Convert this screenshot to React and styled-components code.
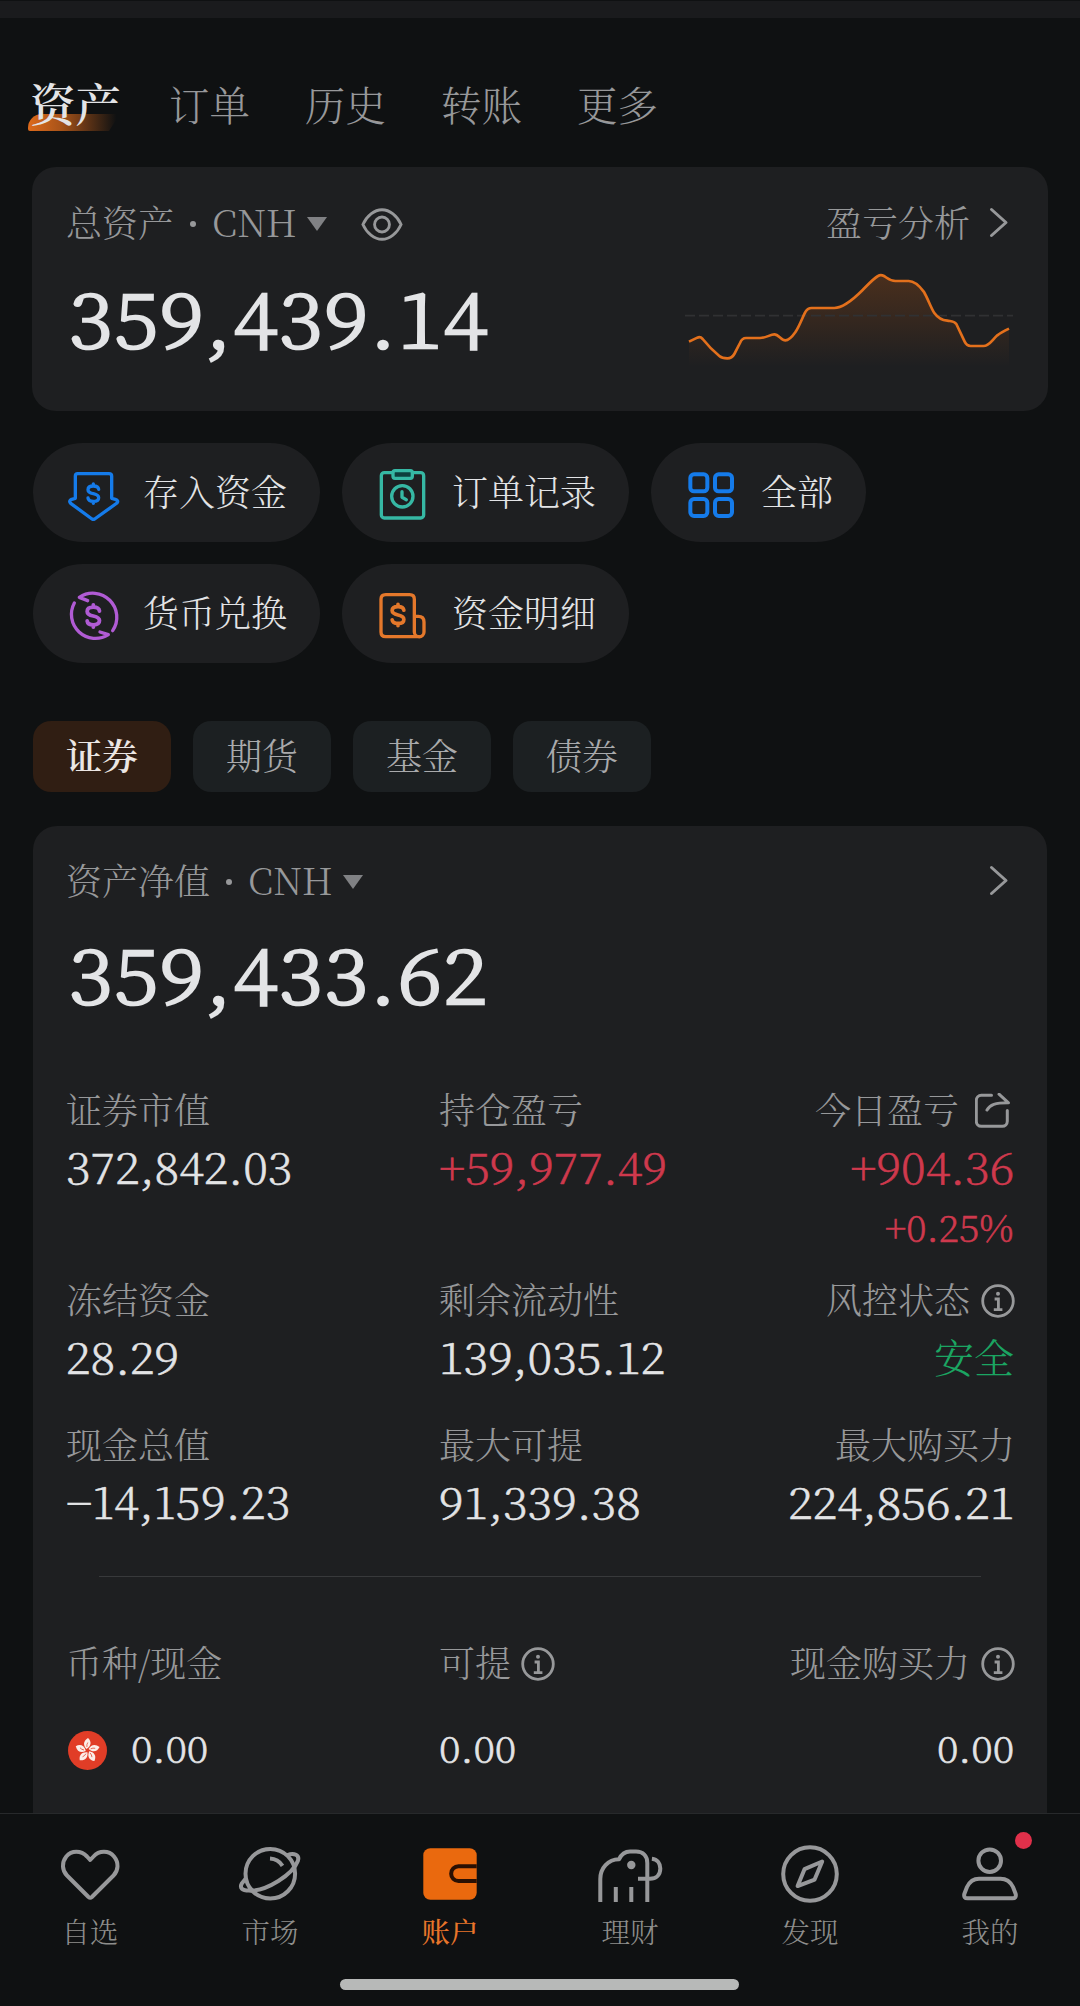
import React, { Component } from "react";
import styled, { createGlobalStyle } from "styled-components";

const serif = `"Noto Serif CJK SC", "Noto Sans CJK SC", serif`;

const colors = {
  page: "#0f1112",
  card: "#1e1f21",
  text: "#e3e4e6",
  muted: "#97989a",
  orange: "#ea690e",
  red: "#cf394d",
  green: "#1ba562"
};

const GlobalStyle = createGlobalStyle`
  body {
    margin: 0;
    background: ${colors.page};
  }
  * {
    box-sizing: border-box;
  }
`;

const Screen = styled.div`
  display: flex;
  flex-direction: column;
  width: 1080px;
  height: 2006px;
  overflow: hidden;
  background: ${colors.page};
  color: ${colors.text};
  font-family: ${serif};
  font-weight: 300;
  white-space: nowrap;
`;

const Strip = styled.div`
  flex: none;
  height: 17px;
  margin-top: 1px;
  background: #1a1b1d;
`;

const Tabs = styled.nav`
  flex: none;
  display: flex;
  height: 149px;
  padding: 62px 0 0 30px;
`;

const Tab = styled.div`
  margin-right: 55px;
  font-size: 40.5px;
  line-height: 48px;
  color: ${colors.muted};
`;

const ActiveTab = styled.div`
  position: relative;
  margin: -1px 48px 0 0;
  font-size: 45.5px;
  line-height: 48px;
  font-weight: 600;
  color: ${colors.text};

  &::before {
    content: "";
    position: absolute;
    left: -2px;
    top: 35px;
    width: 92px;
    height: 17px;
    border-radius: 14px 0 0 2px;
    background: linear-gradient(90deg, #dd6a1b, rgba(221, 106, 27, 0.75) 35%, transparent 96%);
    clip-path: polygon(0 0, 100% 0, 88% 100%, 0 100%);
  }

  span {
    position: relative;
  }
`;

const Card = styled.section`
  flex: ${props => (props.$fill ? "1" : "none")};
  height: ${props => (props.$fill ? "auto" : "244px")};
  min-height: 0;
  margin: ${props => (props.$fill ? "34px 33px 0" : "0 32px")};
  padding: ${props => (props.$fill ? "36px 32px 0 33px" : "37px 35px 0 34px")};
  border-radius: ${props => (props.$fill ? "24px 24px 0 0" : "24px")};
  background: ${colors.card};
`;

const CardHeader = styled.div`
  display: flex;
  align-items: center;
  height: 36px;
`;

const Label = styled.div`
  font-size: 36px;
  line-height: 36px;
  height: 36px;
  color: ${colors.muted};
`;

const Dot = styled.i`
  width: 6px;
  height: 6px;
  margin: 3px 16px 0 16px;
  border-radius: 50%;
  background: ${colors.muted};
`;

const Currency = styled.span`
  font-size: 36.5px;
  line-height: 34px;
  height: 36px;
  color: ${colors.muted};
`;

const Triangle = styled.i`
  margin: 4px 0 0 10px;
  border: 10.5px solid transparent;
  border-top: 14px solid #808184;
  border-bottom: 0;
`;

const EyeButton = styled.span`
  display: flex;
  margin: 4px 0 0 34px;
`;

const HeaderLink = styled.div`
  display: flex;
  align-items: center;
  gap: 18px;
  margin-left: auto;
  padding-right: ${props => props.$inset || 0}px;
`;

const BigRow = styled.div`
  display: flex;
  justify-content: space-between;
  margin-top: 41px;

  svg {
    margin-top: -11px;
  }
`;

const BigNumber = styled.div`
  height: 80px;
  margin: ${props => props.$top || 0}px 0 0 3px;
  font-size: 76px;
  line-height: 69px;
  font-weight: 200;
  letter-spacing: 1.5px;
  transform: scaleX(1.08);
  transform-origin: left;
  -webkit-text-stroke: 2.6px ${colors.text};
`;

const Pills = styled.div`
  flex: none;
  display: flex;
  flex-wrap: wrap;
  gap: 22px;
  margin: 32px 33px 0;
`;

const Pill = styled.button`
  display: flex;
  align-items: center;
  gap: 23px;
  height: 99px;
  padding: 0 33px;
  border: 0;
  border-radius: 50px;
  background: ${colors.card};
  color: ${colors.text};
  font: inherit;
  font-size: 36px;
  line-height: 36px;

  svg {
    overflow: visible;
  }

  span {
    margin-top: -3px;
  }
`;

const Segments = styled.div`
  flex: none;
  display: flex;
  gap: 22px;
  margin: 58px 33px 0;
`;

const Segment = styled.div`
  width: 138px;
  height: 71px;
  border-radius: 18px;
  text-align: center;
  font-size: 36px;
  line-height: 67px;
  background: ${props => (props.$active ? "#301e13" : "#1c2022")};
  color: ${props => (props.$active ? "#ebe6e3" : "#a9aaac")};
  font-weight: ${props => (props.$active ? 600 : 300)};
`;

const Grid = styled.div`
  display: grid;
  grid-template-columns: 373px 1fr 1fr;
  margin-top: ${props => props.$top}px;
`;

const Cell = styled.div`
  display: flex;
  flex-direction: column;
  gap: ${props => props.$gap || 19}px;
  align-items: ${props => (props.$right ? "flex-end" : "flex-start")};
`;

const LabelRow = styled.div`
  display: flex;
  align-items: center;
  gap: ${props => props.$gap || 11}px;
  height: 36px;
  padding-right: ${props => props.$inset || 0}px;

  svg {
    position: relative;
    top: 2px;
  }
`;

const Value = styled.div`
  display: flex;
  align-items: center;
  height: ${props => (props.$small ? 36 : 46)}px;
  padding-bottom: ${props => (props.$small ? 6 : 6)}px;
  font-size: ${props => (props.$small ? 37.5 : 43)}px;
  font-weight: 200;
  line-height: 46px;
  color: ${props => colors[props.$color] || colors.text};
  -webkit-text-stroke: 0.6px;
  transform: scaleX(${props => props.$stretch || 1.07});
  transform-origin: left;

  ${Cell}:last-child & {
    margin-right: 1px;
    transform-origin: right;
  }
`;

const Status = styled.div`
  height: 46px;
  margin-right: 1px;
  font-size: 40px;
  line-height: 40px;
  color: ${colors.green};
`;

const Divider = styled.hr`
  height: 1px;
  margin: 49px 34px 0 33px;
  border: 0;
  background: #38393b;
`;

const CurrencyCell = styled.div`
  display: flex;
  align-items: center;
  gap: 24px;
  height: 46px;
  padding: 0 0 4px 2px;
`;

const BottomBar = styled.footer`
  flex: none;
  height: 193px;
  border-top: 1px solid #27292b;
  background: ${colors.page};
`;

const BottomTabs = styled.div`
  display: grid;
  grid-template-columns: repeat(6, 180px);
  height: 165px;
  padding-top: 27px;
`;

const BottomTab = styled.div`
  position: relative;
  display: flex;
  flex-direction: column;
  align-items: center;
  gap: 10px;
  font-size: 28.5px;
  line-height: 28px;
  font-weight: ${props => (props.$active ? 500 : 300)};
  color: ${props => (props.$active ? "#e8752a" : "#8e8e8c")};
`;

const Badge = styled.i`
  position: absolute;
  left: 115px;
  top: -9px;
  width: 17px;
  height: 17px;
  border-radius: 50%;
  background: #e0304a;
`;

const HomeIndicator = styled.div`
  width: 399px;
  height: 11px;
  margin: 0 0 0 340px;
  border-radius: 6px;
  background: #b7b9b8;
`;

const Eye = () => (
  <svg width="42" height="35" viewBox="0 0 44 36" fill="none" stroke="#97989a" strokeWidth="3">
    <path d="M2 18C6 9 14 2.5 22 2.5S38 9 42 18C38 27 30 33.5 22 33.5S6 27 2 18Z" />
    <circle cx="22" cy="18" r="7.8" />
  </svg>
);

const Chevron = () => (
  <svg width="24" height="32" viewBox="0 0 24 32" fill="none" stroke="#97989a" strokeWidth="3" strokeLinecap="round" strokeLinejoin="round">
    <path d="M3.5 3.5L18 16.5L3.5 29.5" />
  </svg>
);

const Info = () => (
  <svg width="34" height="34" viewBox="0 0 34 34" fill="none" stroke="#97989a" strokeWidth="2.8">
    <circle cx="17" cy="17" r="15.3" />
    <circle cx="17" cy="9.8" r="2" fill="#97989a" stroke="none" />
    <path d="M13.6 15H17.4V25.2M12.8 25.6H21.4" />
  </svg>
);

const Share = () => (
  <svg width="37" height="36" viewBox="0 0 37 36" fill="none" stroke="#97989a" strokeWidth="3" strokeLinecap="round" strokeLinejoin="round">
    <path d="M16.5 2.3H6.3a5 5 0 0 0-5 5V28.3a5 5 0 0 0 5 5H27.3a5 5 0 0 0 5-5V17.5" />
    <path d="M12 17C15 11.5 20 9.8 33.5 9.8L24 1.2" />
  </svg>
);

const CURVE =
  "M147 545L172 533Q181 529 188 537Q212 567 238 588Q246 595 262 595Q276 595 283 582L300 549Q306 534 318 534H360C380 534 390 523 403 523C416 523 424 541 436 541C446 541 460 525 467 515C476 503 487 474 495 458Q502 444 515 444H583C612 444 650 408 668 390C685 373 700 356 714 348Q722 343 732 348C742 354 750 363 766 363H806C828 363 843 384 852 396C864 417 874 446 883 459C893 473 910 481 922 482C934 484 942 482 949 492L974 545Q980 558 992 558H1030C1048 558 1056 540 1072 526Q1084 517 1107 506";

const Sparkline = () => (
  <svg width="328" height="100" viewBox="135 330 984 300" fill="none">
    <defs>
      <linearGradient id="area" x1="0" y1="340" x2="0" y2="620" gradientUnits="userSpaceOnUse">
        <stop offset="0" stopColor="#ea690e" stopOpacity="0.22" />
        <stop offset="1" stopColor="#ea690e" stopOpacity="0" />
      </linearGradient>
    </defs>
    <path d={`${CURVE}V620H147Z`} fill="url(#area)" />
    <path d="M135 467H1119" stroke="#303133" strokeWidth="5" strokeDasharray="30 12" />
    <path d={CURVE} stroke="#e3701c" strokeWidth="8" strokeLinejoin="round" />
  </svg>
);

const ActionSvg = ({ color, children, width = 10 }) => (
  <svg width="54" height="54" viewBox="0 0 162 162" fill="none" stroke={color} strokeWidth={width} strokeLinecap="round" strokeLinejoin="round">
    {children}
  </svg>
);

const Dollar = ({ x, y, scale = 1 }) => (
  <path
    transform={`translate(${x} ${y}) scale(${scale})`}
    d="M16 -13C15 -21 9 -23 0 -23C-10 -23 -16 -19 -16 -12C-16 -4 -9 -2 0 0C9 2 16 4 16 12C16 19 10 23 0 23C-9 23 -15 21 -16 13M0 -29V-23M0 23V29"
  />
);

const Deposit = () => (
  <ActionSvg color="#157bea">
    <path d="M28 97V30Q28 23 35 23H129Q137 23 137 30V97L148 100Q159 104 153 111L86 159Q82 161 78 159L14 112Q7 105 17 100Z" />
    <Dollar x={82} y={83} />
  </ActionSvg>
);

const Records = () => (
  <ActionSvg color="#36b8a4">
    <rect x="19" y="20" width="127" height="136" rx="9" />
    <rect x="54" y="14" width="58" height="23" rx="6" fill="#0d3f3d" />
    <circle cx="82" cy="91" r="32" />
    <path d="M81 77V94L94 101" />
  </ActionSvg>
);

const All = () => (
  <ActionSvg color="#157bea" width={12}>
    <rect x="19" y="25" width="51" height="51" rx="11" />
    <rect x="93" y="25" width="51" height="51" rx="11" />
    <rect x="19" y="99" width="51" height="51" rx="11" />
    <rect x="93" y="99" width="51" height="51" rx="11" />
  </ActionSvg>
);

const Exchange = () => (
  <ActionSvg color="#b05bd4">
    <path d="M65 41L40 31A72 72 0 0 1 140 131" />
    <path d="M25 48A72 72 0 0 0 127 143L102 135" />
    <Dollar x={82} y={87} scale={1.15} />
  </ActionSvg>
);

const Statement = () => (
  <ActionSvg color="#e5782b">
    <path d="M133 149H32Q18 149 18 135V37Q18 23 32 23H104Q118 23 118 37V135A14 14 0 0 0 147 135V105Q147 88 130 88H119" />
    <Dollar x={69} y={84} scale={1.1} />
  </ActionSvg>
);

const Flag = () => (
  <svg width="39" height="39" viewBox="-19.5 -19.5 39 39">
    <circle r="19.5" fill="#e13d27" />
    {[0, 72, 144, 216, 288].map(angle => (
      <g key={angle} transform={`rotate(${angle})`}>
        <path d="M-1 -1.5C-4.5 -5 -4.5 -9.5 0.5 -12.5C4.2 -9 4 -4.5 -1 -1.5Z" fill="#fbeee9" />
        <path d="M-0.6 -3.5Q-1 -6 0.3 -8" fill="none" stroke="#e13d27" strokeWidth="0.7" />
      </g>
    ))}
  </svg>
);

const BarSvg = ({ children }) => (
  <svg width="66" height="66" viewBox="0 0 66 66" fill="none" stroke="#97989a" strokeWidth="4" strokeLinejoin="round">
    {children}
  </svg>
);

const Heart = () => (
  <BarSvg>
    <path d="M33.2 19L30 15.5C24 9.3 14.5 9.3 9.3 15.5C4.5 21.5 5 29.5 10 34.5L31.5 56Q33.2 57.5 34.9 56L56.5 34.5C61.5 29.5 62 21.5 57 15.5C52 9.3 42 9.3 36.5 15.5Z" />
  </BarSvg>
);

const Planet = () => (
  <BarSvg>
    <circle cx="33.3" cy="32.7" r="24.8" />
    <path d="M50.5 14C57 11.5 63 14 60.8 20C56 33 30 50.5 12 49.6C5 49.6 2.5 47 4.8 42.5L8.8 37.5" />
    <path d="M33 17.6Q41 18 45.5 24.8" />
  </BarSvg>
);

const Wallet = () => (
  <BarSvg>
    <rect x="6.3" y="7.2" width="53.4" height="51.6" rx="7" fill={colors.orange} stroke="none" />
    <path d="M59.7 25.3H41.5a7.3 7.3 0 0 0 0 14.7H59.7" stroke="#2a1003" />
  </BarSvg>
);

const Elephant = () => (
  <BarSvg>
    <path d="M3.3 61V38C3.3 27 11 18.5 22 18.3C24.5 13 27.5 10.5 33 10.5H39C46 10.5 50.3 15 50.3 22V61" />
    <path d="M18.8 46V61M34.3 46V61" />
    <path d="M54.9 17.8C60.5 18.5 63.3 22.5 63.3 27.5C63.3 34 59 37.7 53 37.7H41" />
    <circle cx="34.3" cy="24" r="4.2" fill="#97989a" stroke="none" />
  </BarSvg>
);

const Compass = () => (
  <BarSvg>
    <circle cx="33" cy="33" r="26.8" />
    <path d="M45.2 20.5L27.5 28.2L20.6 45.1L37.6 38.6Z" />
  </BarSvg>
);

const Person = () => (
  <BarSvg>
    <circle cx="32.7" cy="19.7" r="11.3" />
    <path d="M22 37.7H43.5Q52 37.7 56 46L58.7 53Q59.5 57.3 55.5 57.3H10.5Q6.5 57.3 7.3 53L10 46Q14 37.7 22 37.7Z" />
  </BarSvg>
);

const actions = [
  { name: "存入资金", Icon: Deposit },
  { name: "订单记录", Icon: Records },
  { name: "全部", Icon: All },
  { name: "货币兑换", Icon: Exchange },
  { name: "资金明细", Icon: Statement }
];

const bottomTabs = [
  { name: "自选", Icon: Heart },
  { name: "市场", Icon: Planet },
  { name: "账户", Icon: Wallet },
  { name: "理财", Icon: Elephant },
  { name: "发现", Icon: Compass },
  { name: "我的", Icon: Person, badge: true }
];

class App extends Component {
  render() {
    return (
      <Screen>
        <GlobalStyle />
        <Strip />

        <Tabs>
          <ActiveTab>
            <span>资产</span>
          </ActiveTab>
          {["订单", "历史", "转账", "更多"].map(name => (
            <Tab key={name}>{name}</Tab>
          ))}
        </Tabs>

        <Card>
          <CardHeader>
            <Label>总资产</Label>
            <Dot />
            <Currency>CNH</Currency>
            <Triangle />
            <EyeButton>
              <Eye />
            </EyeButton>
            <HeaderLink $inset={1}>
              <Label>盈亏分析</Label>
              <Chevron />
            </HeaderLink>
          </CardHeader>
          <BigRow>
            <BigNumber>359,439.14</BigNumber>
            <Sparkline />
          </BigRow>
        </Card>

        <Pills>
          {actions.map(({ name, Icon }) => (
            <Pill key={name}>
              <Icon />
              <span>{name}</span>
            </Pill>
          ))}
        </Pills>

        <Segments>
          {["证券", "期货", "基金", "债券"].map((name, i) => (
            <Segment key={name} $active={i === 0}>
              {name}
            </Segment>
          ))}
        </Segments>

        <Card $fill>
          <CardHeader>
            <Label>资产净值</Label>
            <Dot />
            <Currency>CNH</Currency>
            <Triangle />
            <HeaderLink $inset={3}>
              <Chevron />
            </HeaderLink>
          </CardHeader>
          <BigNumber $top={39}>359,433.62</BigNumber>

          <Grid $top={74}>
            <Cell>
              <Label>证券市值</Label>
              <Value>372,842.03</Value>
            </Cell>
            <Cell>
              <Label>持仓盈亏</Label>
              <Value $color="red">+59,977.49</Value>
            </Cell>
            <Cell $right>
              <LabelRow $gap={16} $inset={3}>
                <Label>今日盈亏</Label>
                <Share />
              </LabelRow>
              <Value $color="red">+904.36</Value>
              <Value $color="red" $small $stretch={1.01}>
                +0.25%
              </Value>
            </Cell>
          </Grid>

          <Grid $top={34}>
            <Cell>
              <Label>冻结资金</Label>
              <Value>28.29</Value>
            </Cell>
            <Cell>
              <Label>剩余流动性</Label>
              <Value>139,035.12</Value>
            </Cell>
            <Cell $right>
              <LabelRow>
                <Label>风控状态</Label>
                <Info />
              </LabelRow>
              <Status>安全</Status>
            </Cell>
          </Grid>

          <Grid $top={44}>
            <Cell>
              <Label>现金总值</Label>
              <Value>−14,159.23</Value>
            </Cell>
            <Cell>
              <Label>最大可提</Label>
              <Value>91,339.38</Value>
            </Cell>
            <Cell $right>
              <Label>最大购买力</Label>
              <Value>224,856.21</Value>
            </Cell>
          </Grid>

          <Divider />

          <Grid $top={67}>
            <Cell $gap={49}>
              <Label>币种/现金</Label>
              <CurrencyCell>
                <Flag />
                <Value $small>0.00</Value>
              </CurrencyCell>
            </Cell>
            <Cell $gap={52}>
              <LabelRow $gap={10}>
                <Label>可提</Label>
                <Info />
              </LabelRow>
              <Value $small>0.00</Value>
            </Cell>
            <Cell $right $gap={52}>
              <LabelRow>
                <Label>现金购买力</Label>
                <Info />
              </LabelRow>
              <Value $small>0.00</Value>
            </Cell>
          </Grid>
        </Card>

        <BottomBar>
          <BottomTabs>
            {bottomTabs.map(({ name, Icon, badge }) => (
              <BottomTab key={name} $active={name === "账户"}>
                <Icon />
                {name}
                {badge && <Badge />}
              </BottomTab>
            ))}
          </BottomTabs>
          <HomeIndicator />
        </BottomBar>
      </Screen>
    );
  }
}

export default App;
